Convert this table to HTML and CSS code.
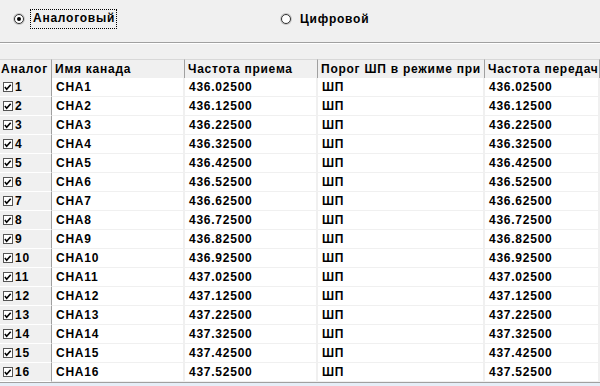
FILE: index.html
```html
<!DOCTYPE html>
<html lang="ru">
<head>
<meta charset="utf-8">
<link rel="stylesheet" href="styles.css">
</head>
<body>
<div class="top">
  <label class="radio first"><span class="dot checked"></span><span class="focus">Аналоговый</span></label>
  <label class="radio second"><span class="dot"></span><span class="lbl">Цифровой</span></label>
</div>
<div class="sep"></div>
<div class="gap"></div>
<div class="grid" id="grid">
  <div class="hd rh">Аналог</div>
  <div class="hd">Имя канада</div>
  <div class="hd">Частота приема</div>
  <div class="hd">Порог ШП в режиме при</div>
  <div class="hd">Частота передач</div>
</div>
<div class="bottom"></div>
<script>
var g = document.getElementById('grid');
var chk = '<span class="cb"><svg width="9" height="9" viewBox="0 0 9 9"><path d="M1 4 L3 6.5 L7.5 1.5" fill="none" stroke="#000" stroke-width="1.8"/></svg></span>';
for (var i = 1; i <= 16; i++) {
  var f = (436.025 + (i - 1) * 0.1).toFixed(5);
  g.insertAdjacentHTML('beforeend',
    '<div class="c rh">' + chk + '<span>' + i + '</span></div>' +
    '<div class="c">CHA' + i + '</div>' +
    '<div class="c">' + f + '</div>' +
    '<div class="c">ШП</div>' +
    '<div class="c">' + f + '</div>');
}
</script>
</body>
</html>
```
FILE: styles.css
```css
html, body {
  margin: 0;
  padding: 0;
  width: 600px;
  height: 386px;
  overflow: hidden;
  background: #f0f0f0;
  font-family: "Liberation Sans", Arial, sans-serif;
  font-weight: bold;
  font-size: 12px;
  letter-spacing: 0.75px;
  color: #000;
}
.top {
  height: 42px;
  display: flex;
  align-items: flex-start;
  padding-left: 14px;
  box-sizing: border-box;
  padding-top: 9px;
}
.radio {
  display: flex;
  align-items: center;
  height: 19px;
}
.second {
  margin-left: 164px;
}
.dot {
  width: 10px;
  height: 10px;
  border: 1px solid #333;
  border-radius: 50%;
  background: #fff;
  box-sizing: border-box;
  position: relative;
  margin-right: 6px;
  box-shadow: 0 0 0 1px #c8c8c8;
}
.dot.checked::after {
  content: "";
  position: absolute;
  left: 2px;
  top: 2px;
  width: 4px;
  height: 4px;
  border-radius: 50%;
  background: #000;
}
.focus {
  border: 1px dotted #000;
  padding: 2px 1px 3px 2px;
  line-height: 13px;
}
.lbl {
  padding-left: 3px;
}
.sep {
  border-top: 1px solid #a0a0a0;
  border-bottom: 1px solid #fff;
}
.gap {
  height: 15px;
}
.grid {
  display: grid;
  grid-template-columns: 52px 133px 133px 167px 115px;
  grid-auto-rows: 19px;
  overflow: hidden;
  width: 600px;
  border-bottom: 1px solid #a0a0a0;
}
.hd {
  height: 20px;
  box-sizing: border-box;
  background: #f0f0f0;
  border-top: 1px solid #d8d8d8;
  border-right: 1px solid #a0a0a0;
  border-bottom: 1px solid #a0a0a0;
  padding-left: 3px;
  line-height: 18px;
  white-space: nowrap;
  overflow: hidden;
}
.hd.rh {
  padding-left: 1px;
}
.c {
  background: #fff;
  border-right: 2px solid #f0f0f0;
  border-bottom: 1px solid #f0f0f0;
  box-sizing: border-box;
  padding-left: 4px;
  line-height: 18px;
  white-space: nowrap;
  overflow: hidden;
}
.c.rh {
  background: #f0f0f0;
  border-right: 1px solid #a0a0a0;
  border-bottom: 1px solid #fff;
  padding-left: 3px;
  display: flex;
  align-items: center;
}
.cb {
  width: 10px;
  height: 10px;
  box-sizing: border-box;
  border: 1px solid #555;
  background: #fff;
  display: flex;
  align-items: center;
  justify-content: center;
  margin-right: 2px;
}
.cb svg {
  display: block;
}
.bottom {
  height: 10px;
  background: #e6eef7;
}
```
